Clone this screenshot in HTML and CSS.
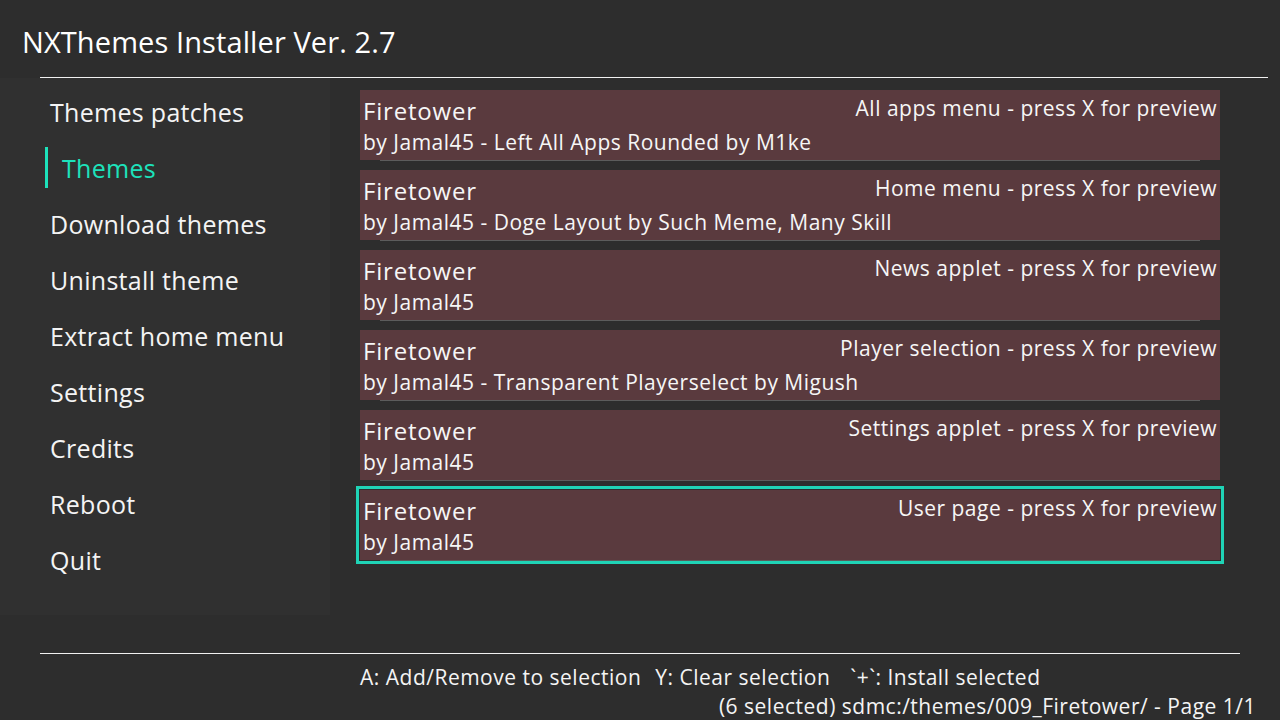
FILE: index.html
```html
<!DOCTYPE html>
<html>
<head>
<meta charset="utf-8">
<link rel="stylesheet" href="styles.css">
</head>
<body>
<div class="screen">
  <header class="header">
    <h1 class="title">NXThemes Installer Ver. 2.7</h1>
    <div class="rule rule-top"></div>
  </header>
  <main class="main">
    <nav class="sidebar">
      <div class="nav-item">Themes patches</div>
      <div class="nav-item active">Themes</div>
      <div class="nav-item">Download themes</div>
      <div class="nav-item">Uninstall theme</div>
      <div class="nav-item">Extract home menu</div>
      <div class="nav-item">Settings</div>
      <div class="nav-item">Credits</div>
      <div class="nav-item">Reboot</div>
      <div class="nav-item">Quit</div>
    </nav>
    <section class="list">
      <div class="entry">
        <div class="entry-top"><span class="entry-name">Firetower</span><span class="entry-target">All apps menu - press X for preview</span></div>
        <div class="entry-desc">by Jamal45 - Left All Apps Rounded by M1ke</div>
      </div>
      <div class="entry">
        <div class="entry-top"><span class="entry-name">Firetower</span><span class="entry-target">Home menu - press X for preview</span></div>
        <div class="entry-desc">by Jamal45 - Doge Layout by Such Meme, Many Skill</div>
      </div>
      <div class="entry">
        <div class="entry-top"><span class="entry-name">Firetower</span><span class="entry-target">News applet - press X for preview</span></div>
        <div class="entry-desc">by Jamal45</div>
      </div>
      <div class="entry">
        <div class="entry-top"><span class="entry-name">Firetower</span><span class="entry-target">Player selection - press X for preview</span></div>
        <div class="entry-desc">by Jamal45 - Transparent Playerselect by Migush</div>
      </div>
      <div class="entry">
        <div class="entry-top"><span class="entry-name">Firetower</span><span class="entry-target">Settings applet - press X for preview</span></div>
        <div class="entry-desc">by Jamal45</div>
      </div>
      <div class="entry focused">
        <div class="entry-top"><span class="entry-name">Firetower</span><span class="entry-target">User page - press X for preview</span></div>
        <div class="entry-desc">by Jamal45</div>
      </div>
    </section>
  </main>
  <footer class="footer">
    <div class="rule rule-bottom"></div>
    <div class="hints"><span>A: Add/Remove to selection</span><span class="gap-a">Y: Clear selection</span><span class="gap-b">`+`: Install selected</span></div>
    <div class="status">(6 selected) sdmc:/themes/009_Firetower/ - Page 1/1</div>
  </footer>
</div>
</body>
</html>
```
FILE: styles.css
```css
* { box-sizing: border-box; }
html, body {
  margin: 0;
  padding: 0;
  background: #2d2d2d;
}
body {
  font-family: "Open Sans", "DejaVu Sans", sans-serif;
  color: #f4f4f4;
}
.screen {
  width: 1280px;
  height: 720px;
  overflow: hidden;
  display: flex;
  flex-direction: column;
}
.header {
  height: 78px;
  display: flex;
  flex-direction: column;
  justify-content: flex-end;
}
.title {
  margin: 0 0 16px 22px;
  font-size: 29px;
  letter-spacing: 0.1px;
  font-weight: 400;
  line-height: 38px;
  color: #ffffff;
}
.rule {
  height: 1px;
  background: #f0f0f0;
}
.rule-top {
  margin: 0 12px 0 40px;
}
.main {
  display: flex;
  height: 537px;
}
.sidebar {
  width: 330px;
  background: #303030;
  padding-top: 6px;
  display: flex;
  flex-direction: column;
}
.nav-item {
  height: 56px;
  line-height: 56px;
  padding-left: 50px;
  font-size: 25px;
  letter-spacing: 0.3px;
  color: #f4f4f4;
}
.nav-item.active {
  color: #1de2bb;
  padding-left: 62px;
  position: relative;
}
.nav-item.active::before {
  content: "";
  position: absolute;
  left: 45px;
  top: 7px;
  width: 3px;
  height: 41px;
  background: #1de2bb;
}
.list {
  padding: 12px 0 0 30px;
  display: flex;
  flex-direction: column;
  gap: 10px;
}
.entry {
  width: 860px;
  height: 70px;
  background: #5a3a3e;
  padding: 4px 3px 0 3px;
  position: relative;
}
.entry::after {
  content: "";
  position: absolute;
  left: 20px;
  right: 20px;
  bottom: -1px;
  height: 1px;
  background: #5c5c5c;
}
.entry.focused {
  outline: 3px solid #1fd3b6;
  outline-offset: 1px;
}
.entry-top {
  display: flex;
  justify-content: space-between;
  align-items: flex-start;
  height: 34px;
}
.entry-name {
  font-size: 24px;
  letter-spacing: 0.8px;
  line-height: 34px;
  color: #f6f6f6;
}
.entry-target {
  font-size: 21px;
  letter-spacing: 0.5px;
  line-height: 28px;
  color: #f6f6f6;
}
.entry-desc {
  font-size: 21px;
  letter-spacing: 0.5px;
  line-height: 29px;
  color: #f6f6f6;
}
.footer {
  padding-top: 38px;
  display: flex;
  flex-direction: column;
}
.rule-bottom {
  margin: 0 40px 0 40px;
}
.hints {
  padding-left: 360px;
  font-size: 21px;
  letter-spacing: 0.5px;
  line-height: 30px;
  margin-top: 8px;
  display: flex;
}
.gap-a { margin-left: 14px; }
.gap-b { margin-left: 20px; }
.status {
  text-align: right;
  padding-right: 24px;
  font-size: 21px;
  letter-spacing: 0.5px;
  line-height: 28px;
}
```
